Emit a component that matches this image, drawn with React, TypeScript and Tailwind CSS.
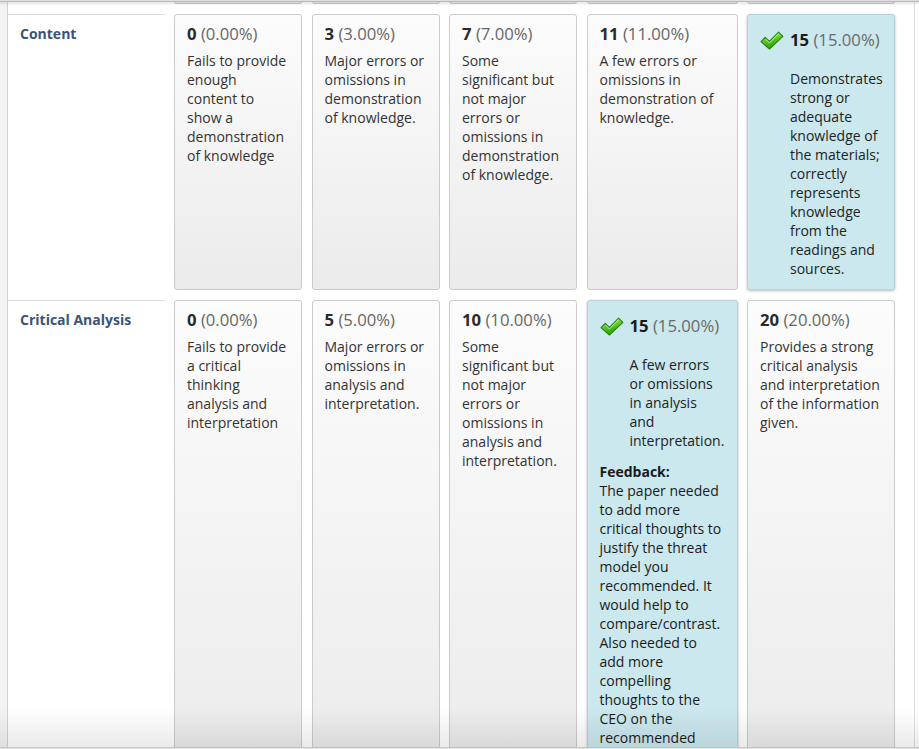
import React from "react";

type Cell = {
  pts: string;
  pct: string;
  desc: string;
  selected?: boolean;
  feedback?: string;
  pr?: string;
};

type Row = { title: string; cells: Cell[] };

const widths = ["w-[128px]", "w-[128px]", "w-[128px]", "w-[151px]", "w-[148px]"];

const rows: Row[] = [
  {
    title: "Content",
    cells: [
      { pts: "0", pct: "(0.00%)", desc: "Fails to provide enough content to show a demonstration of knowledge" },
      { pts: "3", pct: "(3.00%)", desc: "Major errors or omissions in demonstration of knowledge." },
      { pts: "7", pct: "(7.00%)", desc: "Some significant but not major errors or omissions in demonstration of knowledge." },
      { pts: "11", pct: "(11.00%)", desc: "A few errors or omissions in demonstration of knowledge." },
      {
        pts: "15",
        pct: "(15.00%)",
        desc: "Demonstrates strong or adequate knowledge of the materials; correctly represents knowledge from the readings and sources.",
        selected: true,
        pr: "pr-[10px]",
      },
    ],
  },
  {
    title: "Critical Analysis",
    cells: [
      { pts: "0", pct: "(0.00%)", desc: "Fails to provide a critical thinking analysis and interpretation" },
      { pts: "5", pct: "(5.00%)", desc: "Major errors or omissions in analysis and interpretation." },
      { pts: "10", pct: "(10.00%)", desc: "Some significant but not major errors or omissions in analysis and interpretation." },
      {
        pts: "15",
        pct: "(15.00%)",
        desc: "A few errors or omissions in analysis and interpretation.",
        selected: true,
        pr: "pr-[14px]",
        feedback:
          "The paper needed to add more critical thoughts to justify the threat model you recommended. It would help to compare/contrast. Also needed to add more compelling thoughts to the CEO on the recommended solution.",
      },
      { pts: "20", pct: "(20.00%)", desc: "Provides a strong critical analysis and interpretation of the information given." },
    ],
  },
];

function Check() {
  return (
    <svg width="24" height="19" viewBox="0 0 24 19" className="shrink-0">
      <defs>
        <linearGradient id="chk" x1="0" y1="0" x2="0.3" y2="1">
          <stop offset="0" stopColor="#c2f57f" />
          <stop offset="0.45" stopColor="#62d126" />
          <stop offset="1" stopColor="#2c9e0b" />
        </linearGradient>
      </defs>
      <path
        d="M1 10.6 L5.2 6.4 L9.4 10.4 L18.6 1.2 L22.9 5.4 L9.4 18 Z"
        fill="url(#chk)"
        stroke="#2a8410"
        strokeWidth="1.1"
        strokeLinejoin="round"
      />
      <path d="M5.2 7.9 L9.4 11.9 L18.6 2.7" fill="none" stroke="#efffd8" strokeWidth="0.9" opacity="0.75" />
    </svg>
  );
}

function CellView({ cell, w }: { cell: Cell; w: string }) {
  if (cell.selected) {
    return (
      <div
        className={`${w} ${cell.pr ?? "pr-[12px]"} shrink-0 rounded-[3px] border border-[#b7d3d9] bg-[#cbe8ee] pl-[12px] pt-[15px] pb-[11px] shadow-[0_1px_3px_rgba(0,0,0,0.28)]`}
      >
        <div className="flex h-[20px] items-center gap-[6px] text-[16.7px] leading-[20px]">
          <Check />
          <div className="whitespace-nowrap">
            <span className="font-bold text-[#1a1a1a]">{cell.pts}</span>{" "}
            <span className="text-[#6a6a6a]">{cell.pct}</span>
          </div>
        </div>
        <div className="mt-[19px] pl-[30px] text-[14px] leading-[19px] text-[#222]">{cell.desc}</div>
        {cell.feedback && (
          <div className="mt-[12px] text-[14px] leading-[19px] text-[#1a1a1a]">
            <div className="font-bold">Feedback:</div>
            <div>{cell.feedback}</div>
          </div>
        )}
      </div>
    );
  }
  return (
    <div
      className={`${w} shrink-0 rounded-[3px] border border-[#cbcbcb] bg-linear-to-b from-[#fcfcfc] to-[#ebebeb] px-[12px] pt-[9px] pb-[11px]`}
    >
      <div className="h-[20px] whitespace-nowrap text-[16.7px] leading-[20px]">
        <span className="font-bold text-[#2a2a2a]">{cell.pts}</span>{" "}
        <span className="text-[#666]">{cell.pct}</span>
      </div>
      <div className="mt-[7px] text-[14px] leading-[19px] text-[#333]">{cell.desc}</div>
    </div>
  );
}

export default function App() {
  return (
    <div className="relative h-[749px] w-[919px] overflow-hidden bg-white font-['Open_Sans',sans-serif]">
      <div className="flex h-full">
        <div className="w-[8px] shrink-0 border-r border-[#d2d2d2] bg-[#f3f3f3]" />
        <div className="w-[907px] shrink-0 border-r border-[#dedede]">
          {/* tail of previous row */}
          <div className="flex h-[14px] items-start">
            <div className="w-[157px] shrink-0" />
            <div className="ml-[9px] flex gap-[9.5px]">
              {widths.map((w, i) => (
                <div
                  key={i}
                  className={`${w} h-[4px] shrink-0 rounded-b-[3px] border-x border-b border-[#cbcbcb] bg-[#ececec]`}
                />
              ))}
            </div>
          </div>
          <div className="flex flex-col gap-[10px]">
            {rows.map((row) => (
              <div key={row.title} className="flex items-stretch">
                <div className="w-[157px] shrink-0 border-t border-[#dcdcdc] pl-[12px] pt-[9px]">
                  <div className="text-[14px] font-bold leading-[19px] text-[#3b5477]">{row.title}</div>
                </div>
                <div className="ml-[9px] flex items-stretch gap-[9.5px]">
                  {row.cells.map((c, i) => (
                    <CellView key={i} cell={c} w={widths[i]} />
                  ))}
                </div>
              </div>
            ))}
          </div>
        </div>
        <div className="flex-1 bg-white" />
      </div>
      {/* top scroll edge */}
      <div className="pointer-events-none absolute left-0 right-0 top-0">
        <div className="h-[2px] border-b border-[#bdbdbd] bg-[#dedede]" />
        <div className="h-[4px] bg-linear-to-b from-black/10 to-transparent" />
      </div>
      {/* bottom scroll edge */}
      <div className="pointer-events-none absolute bottom-0 left-0 right-0">
        <div className="h-[40px] bg-linear-to-b from-transparent to-black/[0.08]" />
        <div className="h-[2px] border-t border-[#c4c4c4] bg-[#e4e4e4]" />
      </div>
    </div>
  );
}
